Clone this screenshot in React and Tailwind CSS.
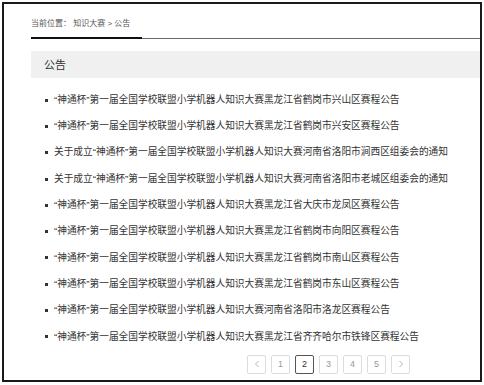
import React from "react";

const notices = [
	"“神通杯”第一届全国学校联盟小学机器人知识大赛黑龙江省鹤岗市兴山区赛程公告",
	"“神通杯”第一届全国学校联盟小学机器人知识大赛黑龙江省鹤岗市兴安区赛程公告",
	"关于成立“神通杯”第一届全国学校联盟小学机器人知识大赛河南省洛阳市涧西区组委会的通知",
	"关于成立“神通杯”第一届全国学校联盟小学机器人知识大赛河南省洛阳市老城区组委会的通知",
	"“神通杯”第一届全国学校联盟小学机器人知识大赛黑龙江省大庆市龙凤区赛程公告",
	"“神通杯”第一届全国学校联盟小学机器人知识大赛黑龙江省鹤岗市向阳区赛程公告",
	"“神通杯”第一届全国学校联盟小学机器人知识大赛黑龙江省鹤岗市南山区赛程公告",
	"“神通杯”第一届全国学校联盟小学机器人知识大赛黑龙江省鹤岗市东山区赛程公告",
	"“神通杯”第一届全国学校联盟小学机器人知识大赛河南省洛阳市洛龙区赛程公告",
	"“神通杯”第一届全国学校联盟小学机器人知识大赛黑龙江省齐齐哈尔市铁锋区赛程公告",
];

const PageButton = ({ children, active }) => {
	return (
		<div
			className={
				active
					? "w-[19px] h-[19px] flex items-center justify-center rounded-[2px] border border-[#555] text-[#333] text-[9px]"
					: "w-[19px] h-[19px] flex items-center justify-center rounded-[2px] border border-[#dcdcdc] text-[#999] text-[9px]"
			}
		>
			{children}
		</div>
	);
};

const App = () => {
	return (
		<div className="bg-white w-[484px] h-[385px] pt-[2px] pl-[2px] font-['Liberation_Sans','Noto_Sans_CJK_SC',sans-serif]">
			<div className="w-[480px] h-[380px] border-2 border-[#1a1a1a] pl-[27px]">
				{/* breadcrumb */}
				<div className="pt-[14px] h-[33px] text-[8px] leading-[12px] text-[#555]">
					当前位置：&nbsp;知识大赛 &gt; 公告
				</div>
				<div className="flex items-end">
					<div className="w-[111px] h-[2px] bg-[#111]" />
					<div className="flex-1 h-px bg-[#6a6a6a]" />
				</div>

				{/* title bar */}
				<div className="mt-[12px] h-[27px] bg-[#f0f0f0] pl-[13px] pt-px flex items-center text-[11px] text-[#333]">
					公告
				</div>

				{/* list */}
				<ul className="mt-[9px]">
					{notices.map((n, i) => (
						<li key={i} className="h-[26.3px] flex items-center text-[9.7px] text-[#333]">
							<span className="w-[3px] h-[3px] bg-[#333] ml-[14px] mr-[6px]" />
							{n}
						</li>
					))}
				</ul>

				{/* pagination */}
				<div className="mt-[5px] ml-[216px] flex gap-[5px]">
					<PageButton>
						<svg width="8" height="8" viewBox="0 0 8 8" fill="none" stroke="#aaa" strokeWidth="0.9">
							<path d="M5.5 1 L2.5 4 L5.5 7" />
						</svg>
					</PageButton>
					<PageButton>1</PageButton>
					<PageButton active>2</PageButton>
					<PageButton>3</PageButton>
					<PageButton>4</PageButton>
					<PageButton>5</PageButton>
					<PageButton>
						<svg width="8" height="8" viewBox="0 0 8 8" fill="none" stroke="#aaa" strokeWidth="0.9">
							<path d="M2.5 1 L5.5 4 L2.5 7" />
						</svg>
					</PageButton>
				</div>
			</div>
		</div>
	);
};

export default App;
